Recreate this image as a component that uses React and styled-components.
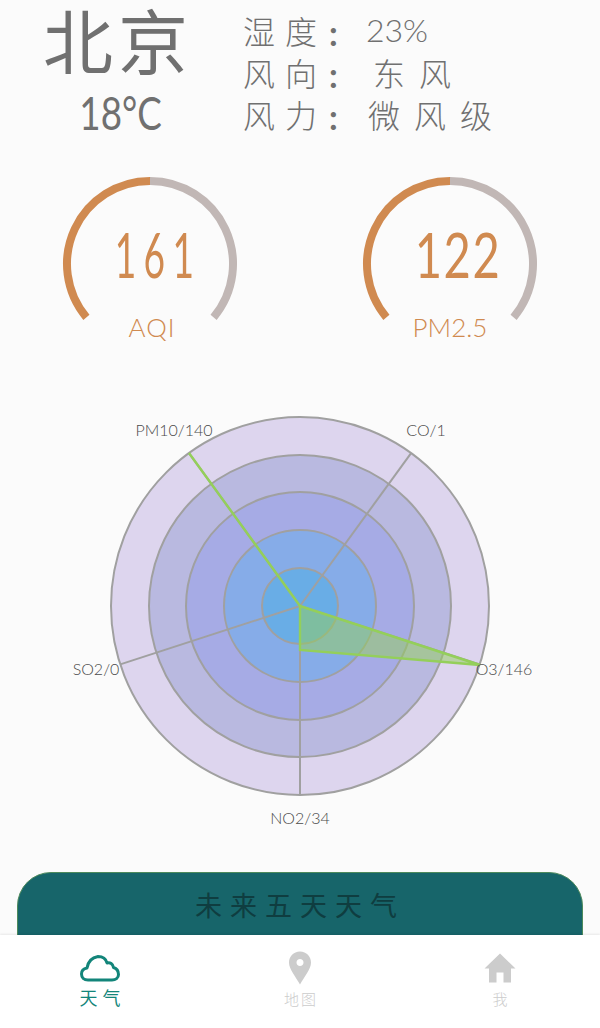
import React from "react";
import styled, { createGlobalStyle } from "styled-components";

const GlobalStyle = createGlobalStyle`
  html, body {
    margin: 0;
    padding: 0;
    background: #fbfbfb;
  }
  * {
    box-sizing: border-box;
  }
`;

const handFont = `"Noto Sans CJK SC", sans-serif`;
const digitFont = `Lato, "Noto Sans CJK SC", sans-serif`;

// angle in degrees, clockwise from 12 o'clock
const polar = (cx, cy, r, deg) => {
  const a = ((deg - 90) * Math.PI) / 180;
  return [cx + r * Math.cos(a), cy + r * Math.sin(a)];
};

const arcPath = (cx, cy, r, from, to) => {
  const [x1, y1] = polar(cx, cy, r, from);
  const [x2, y2] = polar(cx, cy, r, to);
  const large = to - from > 180 ? 1 : 0;
  return `M${x1} ${y1}A${r} ${r} 0 ${large} 1 ${x2} ${y2}`;
};

const Gauge = ({ value, label, squeeze, spread, wide }) => (
  <GaugeBox>
    <svg width="176" height="176" viewBox="0 0 176 176">
      <path d={arcPath(88, 88, 83, 0, 130)} fill="none" stroke="#c1b7b5" strokeWidth="8" />
      <path d={arcPath(88, 88, 83, -130, 0)} fill="none" stroke="#d08a50" strokeWidth="8" />
    </svg>
    <GaugeValue $squeeze={squeeze} $spread={spread}>
      {value}
    </GaugeValue>
    <GaugeLabel $wide={wide}>{label}</GaugeLabel>
  </GaugeBox>
);

const rings = [
  [189, "#ddd5ee"],
  [151, "#b9b9e0"],
  [114, "#a6abe5"],
  [76, "#86ace8"],
  [38, "#69ade6"],
];

const axes = [36, 108, 180, 252, 324];

const radarLabels = [
  { text: "PM10/140", x: 174, y: 436 },
  { text: "CO/1", x: 426, y: 436 },
  { text: "O3/146", x: 504, y: 675 },
  { text: "NO2/34", x: 300, y: 824 },
  { text: "SO2/0", x: 96, y: 675 },
];

const RadarChart = () => {
  // svg starts at x=60, y=400 of the page
  const cx = 240;
  const cy = 206;
  return (
    <RadarSvg width="490" height="440" viewBox="0 0 490 440">
      {rings.map(([r, fill]) => (
        <circle key={r} cx={cx} cy={cy} r={r} fill={fill} stroke="#a0a0a0" strokeWidth="2" />
      ))}
      {axes.map((deg) => {
        const [x, y] = polar(cx, cy, 189, deg);
        return <line key={deg} x1={cx} y1={cy} x2={x} y2={y} stroke="#a0a0a0" strokeWidth="2" />;
      })}
      <polygon
        points="240,206 420,265 240,250 240,206 129,53"
        fill="rgba(148,207,90,0.5)"
        stroke="#94cf5a"
        strokeWidth="2.4"
      />
      {radarLabels.map((l) => (
        <RadarLabel key={l.text} x={l.x - 60} y={l.y - 400} textAnchor="middle">
          {l.text}
        </RadarLabel>
      ))}
    </RadarSvg>
  );
};

const CloudIcon = () => (
  <svg width="40" height="27" viewBox="0 0 40 27">
    <path
      d="M8 25C4 25 1.5 22.5 1.5 19C1.5 15.5 4 13.5 7 13C8 7 12 2.5 18 1.5C23 1.5 26 4 27 8C30 7 33 9 33.5 12.5C36.5 13.5 38.5 16 38.5 19.5C38.5 23 35.5 25 32 25Z"
      fill="none"
      stroke="#13857a"
      strokeWidth="3"
      strokeLinejoin="round"
    />
  </svg>
);

const PinIcon = () => (
  <svg width="24" height="34" viewBox="0 0 24 34">
    <path
      fillRule="evenodd"
      d="M12 0.5C5.5 0.5 1 5.5 1 11.5C1 18.5 8 26 12 33.5C16 26 23 18.5 23 11.5C23 5.5 18.5 0.5 12 0.5ZM12 8C14 8 15.5 9.5 15.5 11.5C15.5 13.5 14 15 12 15C10 15 8.5 13.5 8.5 11.5C8.5 9.5 10 8 12 8Z"
      fill="#cccccc"
    />
  </svg>
);

const HomeIcon = () => (
  <svg width="32" height="30" viewBox="0 0 32 30">
    <path d="M16 0.5L31.5 15.5H27V29.5H19.5V19.5H12.5V29.5H5V15.5H0.5Z" fill="#cccccc" />
  </svg>
);

const App = () => {
  return (
    <>
      <GlobalStyle />
      <Screen>
        <Content>
          <Header>
            <CityBlock>
              <CityName>北京</CityName>
              <Temperature>18°C</Temperature>
            </CityBlock>
            <Details>
              <DetailLabel>湿度</DetailLabel>
              <DetailColon>:</DetailColon>
              <DetailValue $tight>23%</DetailValue>
              <DetailLabel>风向</DetailLabel>
              <DetailColon>:</DetailColon>
              <DetailValue $indent>东风</DetailValue>
              <DetailLabel>风力</DetailLabel>
              <DetailColon>:</DetailColon>
              <DetailValue $start>微风级</DetailValue>
            </Details>
          </Header>
          <GaugeRow>
            <Gauge value="161" label="AQI" squeeze={0.6} spread={12} />
            <Gauge value="122" label="PM2.5" squeeze={0.76} spread={2} wide />
          </GaugeRow>
          <RadarChart />
          <ForecastCard>未来五天天气</ForecastCard>
        </Content>
        <TabBar>
          <Tab>
            <TabIcon>
              <CloudIcon />
            </TabIcon>
            <TabText $active>天气</TabText>
          </Tab>
          <Tab>
            <TabIcon>
              <PinIcon />
            </TabIcon>
            <TabText>地图</TabText>
          </Tab>
          <Tab>
            <TabIcon>
              <HomeIcon />
            </TabIcon>
            <TabText>我</TabText>
          </Tab>
        </TabBar>
      </Screen>
    </>
  );
};

export default App;

const Screen = styled.div`
  width: 600px;
  height: 1028px;
  display: flex;
  flex-direction: column;
  overflow: hidden;
  background: #fbfbfb;
`;

const Content = styled.div`
  flex: 1;
  min-height: 0;
  overflow: hidden;
  display: flex;
  flex-direction: column;
`;

const Header = styled.div`
  flex-shrink: 0;
  display: flex;
  height: 176px;
  padding-left: 43px;
  color: #707070;
`;

const CityBlock = styled.div`
  width: 150px;
  display: flex;
  flex-direction: column;
  align-items: center;
`;

const CityName = styled.div`
  font-family: ${handFont};
  font-size: 70px;
  font-weight: 400;
  line-height: 84px;
  letter-spacing: 5px;
  margin-top: -3px;
  white-space: nowrap;
`;

const Temperature = styled.div`
  font-family: ${digitFont};
  font-size: 46px;
  font-weight: 400;
  line-height: 52px;
  margin: 6px 0 0 6px;
  transform: scaleX(0.8);
`;

const Details = styled.div`
  display: grid;
  grid-template-columns: 86px 37px auto;
  grid-auto-rows: 42px;
  align-items: center;
  margin: 9px 0 0 50px;
  height: 126px;
`;

const DetailLabel = styled.div`
  font-family: ${handFont};
  font-size: 32px;
  font-weight: 300;
  line-height: 42px;
  letter-spacing: 10px;
  white-space: nowrap;
`;

const DetailColon = styled.div`
  font-family: ${digitFont};
  font-size: 34px;
  font-weight: 700;
  line-height: 42px;
  padding-top: 5px;
`;

const DetailValue = styled.div`
  font-family: ${(p) => (p.$tight ? digitFont : handFont)};
  font-size: 32px;
  font-weight: 300;
  line-height: 42px;
  letter-spacing: ${(p) => (p.$tight ? "0" : "14px")};
  white-space: nowrap;
  padding-left: ${(p) => (p.$indent ? "7px" : p.$start ? "2px" : "0")};
`;

const GaugeRow = styled.div`
  flex-shrink: 0;
  display: grid;
  grid-template-columns: 300px 300px;
  justify-items: center;
  height: 224px;
`;

const GaugeBox = styled.div`
  position: relative;
  width: 176px;
  height: 176px;
  color: #d08a50;

  svg {
    display: block;
  }
`;

const GaugeValue = styled.div`
  position: absolute;
  top: 38px;
  left: 0;
  width: 100%;
  text-align: center;
  font-family: ${digitFont};
  font-size: 62px;
  font-weight: 400;
  line-height: 80px;
  letter-spacing: ${(p) => p.$spread}px;
  transform: translateX(8px) scaleX(${(p) => p.$squeeze});
`;

const GaugeLabel = styled.div`
  position: absolute;
  top: 133px;
  left: ${(p) => (p.$wide ? "0" : "2px")};
  width: 100%;
  text-align: center;
  font-family: ${digitFont};
  font-size: 26px;
  font-weight: 300;
  line-height: 36px;
  letter-spacing: ${(p) => (p.$wide ? "0" : "1px")};
`;

const RadarSvg = styled.svg`
  display: block;
  margin-left: 60px;
  flex-shrink: 0;
`;

const RadarLabel = styled.text`
  font-family: ${digitFont};
  font-size: 16px;
  font-weight: 300;
  fill: #4a4a4a;
`;

const ForecastCard = styled.div`
  flex-shrink: 0;
  margin: 32px 17px 0;
  height: 100px;
  border: 1px solid #4d8a5c;
  border-radius: 34px 34px 0 0;
  background: #17656a;
  color: #0f3d40;
  font-family: ${handFont};
  font-size: 27px;
  font-weight: 400;
  line-height: 64px;
  letter-spacing: 8px;
  text-align: center;
`;

const TabBar = styled.div`
  position: relative;
  flex: 0 0 93px;
  display: grid;
  grid-template-columns: 200px 200px 200px;
  background: #ffffff;
  box-shadow: 0 -1px 2px rgba(0, 0, 0, 0.08);
`;

const Tab = styled.div`
  display: flex;
  flex-direction: column;
  align-items: center;
  padding-top: 16px;
`;

const TabIcon = styled.div`
  height: 34px;
  display: flex;
  align-items: center;
  justify-content: center;

  svg {
    display: block;
  }
`;

const TabText = styled.div`
  margin-top: ${(p) => (p.$active ? "0" : "2px")};
  padding-left: ${(p) => (p.$active ? "5px" : "2px")};
  font-family: ${handFont};
  font-size: ${(p) => (p.$active ? "18px" : "15px")};
  font-weight: ${(p) => (p.$active ? 400 : 300)};
  line-height: 24px;
  letter-spacing: ${(p) => (p.$active ? "5px" : "2px")};
  color: ${(p) => (p.$active ? "#13857a" : "#cccccc")};
`;
